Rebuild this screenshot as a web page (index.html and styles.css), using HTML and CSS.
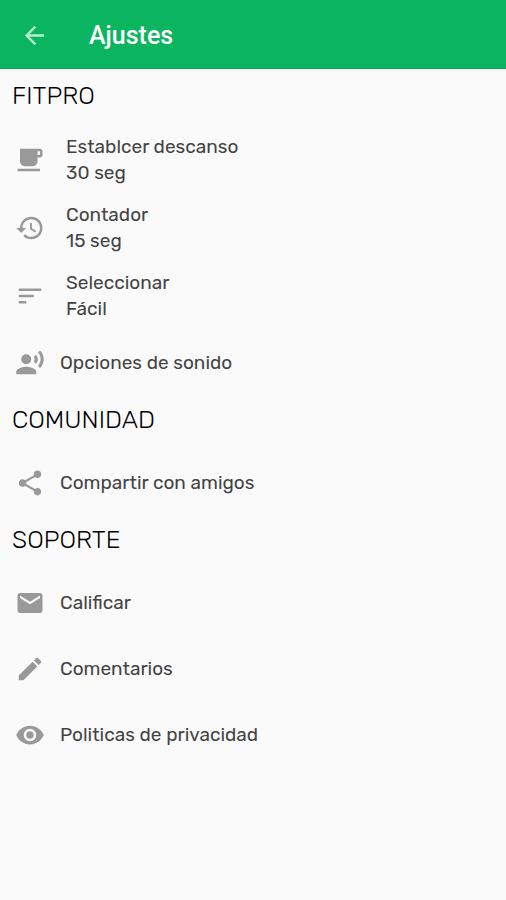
FILE: index.html
```html
<!DOCTYPE html>
<html lang="es">
<head>
    <meta charset="UTF-8">
    <meta name="viewport" content="width=device-width, initial-scale=1.0">
    <title>Ajustes</title>
    <link rel="stylesheet" href="styles.css">
</head>
<body>
    <header class="app-bar">
        <button class="back" type="button" aria-label="Volver">
            <svg viewBox="0 0 24 24"><path d="M20 11H7.83l5.59-5.59L12 4l-8 8 8 8 1.41-1.41L7.83 13H20v-2z"/></svg>
        </button>
        <h1>Ajustes</h1>
    </header>

    <main>
        <section>
            <h2>FITPRO</h2>
            <button class="item detail" type="button">
                <svg viewBox="0 0 24 24"><path d="M20 3H4v10c0 2.21 1.79 4 4 4h6c2.21 0 4-1.79 4-4v-3h2c1.11 0 2-.9 2-2V5c0-1.11-.89-2-2-2zm0 5h-2V5h2v3zM2 21h18v-2H2v2z"/></svg>
                <span class="text">
                    <span>Establcer descanso</span>
                    <span>30 seg</span>
                </span>
            </button>
            <button class="item detail" type="button">
                <svg viewBox="0 0 24 24"><path d="M13 3a9 9 0 0 0-9 9H1l3.89 3.89.07.14L9 12H6c0-3.87 3.13-7 7-7s7 3.13 7 7-3.13 7-7 7c-1.93 0-3.68-.79-4.94-2.06l-1.42 1.42A8.954 8.954 0 0 0 13 21a9 9 0 0 0 0-18zm-1 5v5l4.28 2.54.72-1.21-3.5-2.08V8H12z"/></svg>
                <span class="text">
                    <span>Contador</span>
                    <span>15 seg</span>
                </span>
            </button>
            <button class="item detail" type="button">
                <svg viewBox="0 0 24 24"><path d="M3 18h6v-2H3v2zM3 6v2h18V6H3zm0 7h12v-2H3v2z"/></svg>
                <span class="text">
                    <span>Seleccionar</span>
                    <span>Fácil</span>
                </span>
            </button>
            <button class="item" type="button">
                <svg viewBox="0 0 24 24"><circle cx="9" cy="9" r="4"/><path d="M9 15c-2.67 0-8 1.34-8 4v2h16v-2c0-2.66-5.33-4-8-4zm7.76-9.64-1.68 1.69c.84 1.18.84 2.71 0 3.89l1.68 1.69c2.02-2.02 2.02-5.07 0-7.27zM20.07 2l-1.63 1.63c2.77 3.02 2.77 7.56 0 10.74L20.07 16c3.9-3.89 3.91-9.95 0-14z"/></svg>
                <span class="text">Opciones de sonido</span>
            </button>
        </section>

        <section>
            <h2>COMUNIDAD</h2>
            <button class="item" type="button">
                <svg viewBox="0 0 24 24"><path d="M18 16.08c-.76 0-1.44.3-1.96.77L8.91 12.7c.05-.23.09-.46.09-.7s-.04-.47-.09-.7l7.05-4.11c.54.5 1.25.81 2.04.81 1.66 0 3-1.34 3-3s-1.34-3-3-3-3 1.34-3 3c0 .24.04.47.09.7L8.04 9.81C7.5 9.31 6.79 9 6 9c-1.66 0-3 1.34-3 3s1.34 3 3 3c.79 0 1.5-.31 2.04-.81l7.12 4.16c-.05.21-.08.43-.08.65 0 1.61 1.31 2.92 2.92 2.92s2.92-1.31 2.92-2.92-1.31-2.92-2.92-2.92z"/></svg>
                <span class="text">Compartir con amigos</span>
            </button>
        </section>

        <section>
            <h2>SOPORTE</h2>
            <button class="item" type="button">
                <svg viewBox="0 0 24 24"><path d="M20 4H4c-1.1 0-1.99.9-1.99 2L2 18c0 1.1.9 2 2 2h16c1.1 0 2-.9 2-2V6c0-1.1-.9-2-2-2zm0 4-8 5-8-5V6l8 5 8-5v2z"/></svg>
                <span class="text">Calificar</span>
            </button>
            <button class="item" type="button">
                <svg viewBox="0 0 24 24"><path d="M3 17.25V21h3.75L17.81 9.94l-3.75-3.75L3 17.25zM20.71 7.04a.996.996 0 0 0 0-1.41l-2.34-2.34a.996.996 0 0 0-1.41 0l-1.83 1.83 3.75 3.75 1.83-1.83z"/></svg>
                <span class="text">Comentarios</span>
            </button>
            <a class="item" href="#privacidad">
                <svg viewBox="0 0 24 24"><path d="M12 4.5C7 4.5 2.73 7.61 1 12c1.73 4.39 6 7.5 11 7.5s9.27-3.11 11-7.5c-1.73-4.39-6-7.5-11-7.5zM12 17c-2.76 0-5-2.24-5-5s2.24-5 5-5 5 2.24 5 5-2.24 5-5 5zm0-8c-1.66 0-3 1.34-3 3s1.34 3 3 3 3-1.34 3-3-1.34-3-3-3z"/></svg>
                <span class="text">Politicas de privacidad</span>
            </a>
        </section>
    </main>
</body>
</html>
```
FILE: styles.css
```css
* {
    box-sizing: border-box;
}
body {
    margin: 0;
    font-family: Rubik, Inter, sans-serif;
    background-color: #fafafa;
    color: #222;
}
button {
    border: none;
    background: none;
    font: inherit;
    color: inherit;
    text-align: left;
    cursor: pointer;
}
.app-bar {
    display: flex;
    align-items: center;
    gap: 40px;
    height: 69px;
    padding: 2px 20px 0;
    background-color: #0bb560;
    border-bottom: 1px solid #0aa657;
    color: #fff;
}
.back {
    display: flex;
    padding: 0;
}
.back svg {
    width: 29px;
    height: 29px;
    fill: #b4f0cc;
}
h1 {
    margin: 0;
    font-family: Roboto, sans-serif;
    font-size: 25px;
    font-weight: 500;
}
main {
    padding-top: 3px;
}
h2 {
    margin: 0;
    padding: 9px 12px 15px;
    font-size: 25px;
    font-weight: 300;
    line-height: 30px;
    color: #000;
}
.item {
    display: flex;
    align-items: center;
    gap: 15px;
    width: 100%;
    min-height: 66px;
    padding: 0 15px;
    font-size: 19px;
    line-height: 26px;
    color: #444;
    text-decoration: none;
}
.item svg {
    flex: none;
    width: 30px;
    height: 30px;
    fill: #999;
}
.detail {
    gap: 21px;
    min-height: 68px;
}
.text {
    display: flex;
    flex-direction: column;
}
```
